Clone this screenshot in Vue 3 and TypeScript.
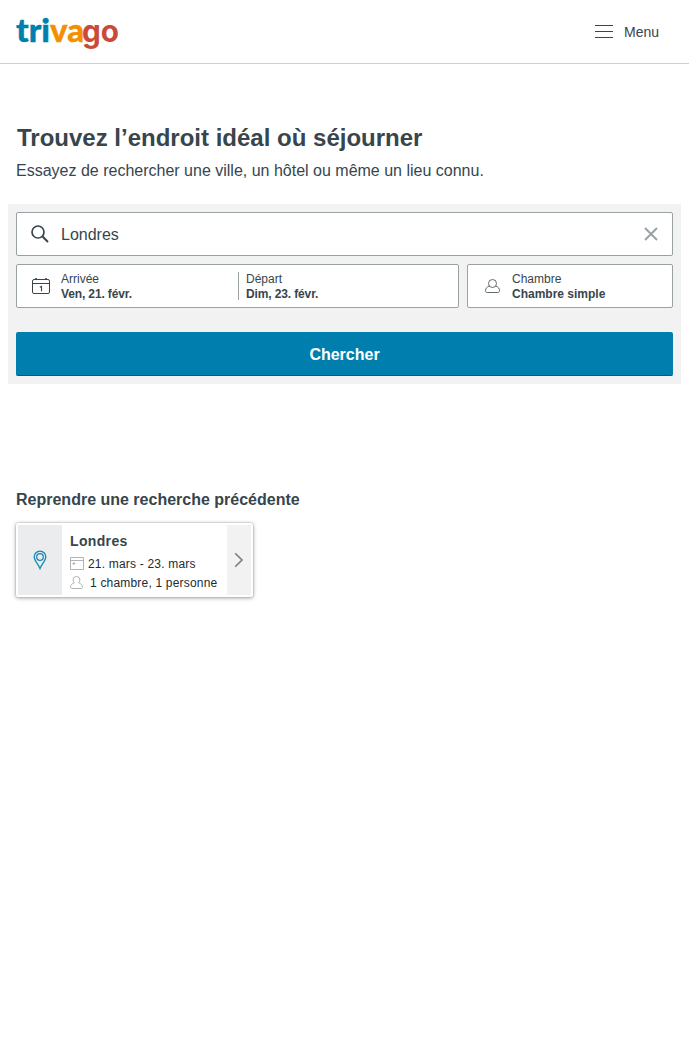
<script setup lang="ts">
import { ref } from 'vue'

const destination = ref('Londres')

interface Stay {
  label: string
  value: string
}

const stays: Stay[] = [
  { label: 'Arrivée', value: 'Ven, 21. févr.' },
  { label: 'Départ', value: 'Dim, 23. févr.' },
]
const room: Stay = { label: 'Chambre', value: 'Chambre simple' }
</script>

<template>
  <div class="page">
    <header class="header">
      <svg class="logo" width="104" height="40" viewBox="0 0 104 40" role="img" aria-label="trivago">
        <text y="29.7" class="tri" x="0" textLength="34" lengthAdjust="spacingAndGlyphs">tri</text>
        <text y="29.7" class="va" x="34" textLength="34" lengthAdjust="spacingAndGlyphs">va</text>
        <text y="29.7" class="go" x="66" textLength="37" lengthAdjust="spacingAndGlyphs">go</text>
      </svg>
      <button class="menu" type="button">
        <svg width="18" height="14" viewBox="0 0 18 14">
          <path d="M0 .5h18M0 6.5h18M0 12.5h18" stroke="#37454d" />
        </svg>
        <span>Menu</span>
      </button>
    </header>

    <main>
      <h1>Trouvez l’endroit idéal où séjourner</h1>
      <p class="intro">Essayez de rechercher une ville, un hôtel ou même un lieu connu.</p>

      <section class="search">
        <div class="box query">
          <svg width="18" height="18" viewBox="0 0 18 18" fill="none" stroke="#37454d">
            <circle cx="7" cy="7" r="6" stroke-width="1.7" />
            <path d="M11.3 11.3L17 17" stroke-width="2" />
          </svg>
          <span class="value">{{ destination }}</span>
          <svg class="clear" width="14" height="14" viewBox="0 0 14 14">
            <path d="M1 1l12 12M13 1L1 13" stroke="#9aa2a6" stroke-width="2" />
          </svg>
        </div>

        <div class="row">
          <div class="box dates">
            <svg class="calendar" width="18" height="17" viewBox="0 0 18 17" fill="none" stroke="#37454d">
              <rect x=".5" y="1.5" width="17" height="14" rx="1.5" />
              <path d="M.5 5.5h17M3 .7h2M13 .7h2" />
              <path d="M7.8 9.3l1.7-.9v4.9" stroke-width="1.1" />
            </svg>
            <div v-for="stay in stays" :key="stay.label" class="stay">
              <span>{{ stay.label }}</span>
              <strong>{{ stay.value }}</strong>
            </div>
          </div>
          <div class="box room">
            <svg width="16" height="15" viewBox="0 0 16 15" fill="none" stroke="#5f6a71">
              <circle cx="7.5" cy="4.5" r="4" />
              <path d="M4.2 7.1C1.8 7.8.5 9.4.5 11.8c0 1.2.6 1.7 1.7 1.7h10.6c1.1 0 1.7-.5 1.7-1.7 0-2.4-1.3-4-3.7-4.7" />
            </svg>
            <div class="pair">
              <span>{{ room.label }}</span>
              <strong>{{ room.value }}</strong>
            </div>
          </div>
        </div>

        <button class="submit" type="button">Chercher</button>
      </section>

      <h2>Reprendre une recherche précédente</h2>
      <article class="card">
        <div class="pin">
          <svg width="14" height="20" viewBox="0 0 14 20" fill="none" stroke="#1687b3" stroke-width="1.3">
            <path d="M7 18.5C5.7 14.7 1.2 10.5 1.2 6.9a5.8 5.8 0 0 1 11.6 0c0 3.6-4.5 7.8-5.8 11.6z" />
            <circle cx="7" cy="7" r="3.3" />
          </svg>
        </div>
        <div class="details">
          <h3>Londres</h3>
          <div class="line">
            <svg width="14" height="13" viewBox="0 0 14 13" fill="none" stroke="#aeb4b7">
              <path d="M.5 .5h13v12H.5zM.5 3.5h13M2.4 6.5h3M3.9 5v3" />
            </svg>
            <span>21. mars - 23. mars</span>
          </div>
          <div class="line persons">
            <svg width="13" height="13" viewBox="0 0 13 13" fill="none" stroke="#aeb4b7">
              <path d="M4.4 6.8C3.5 6.1 3.1 5 3.1 3.9A3.4 3.4 0 0 1 6.5.5a3.4 3.4 0 0 1 3.4 3.4c0 1.1-.4 2.2-1.3 2.9M4.4 6.8C1.9 7.8.6 8.8.5 11c0 1 .5 1.5 1.5 1.5h9c1 0 1.5-.5 1.5-1.5-.1-2.2-1.4-3.2-3.9-4.2" />
            </svg>
            <span>1 chambre, 1 personne</span>
          </div>
        </div>
        <div class="next">
          <svg width="10" height="16" viewBox="0 0 10 16" fill="none">
            <path d="M1.2 1.2L8 8l-6.8 6.8" stroke="#777f84" stroke-width="1.6" />
          </svg>
        </div>
      </article>
    </main>
  </div>
</template>

<style>
body {
  margin: 0;
  background: #fff;
}
</style>

<style scoped>
* {
  box-sizing: border-box;
}
.page {
  min-height: 1064px;
  color: #37454d;
  font-family: "Liberation Sans", Arial, sans-serif;
}
svg {
  display: block;
  flex: none;
}
button {
  font-family: inherit;
  border: 0;
  padding: 0;
}
.header {
  height: 64px;
  display: flex;
  justify-content: space-between;
  align-items: center;
  padding: 0 30px 0 16px;
  border-bottom: 1px solid #cdd0d2;
}
.logo {
  overflow: visible;
  font: 900 32px/1 Lato, sans-serif;
  stroke-width: 0.4px;
}
.tri { fill: #007faf; stroke: #007faf; }
.va { fill: #f48f00; stroke: #f48f00; }
.go {
  fill: #c94a38;
  font-family: Inter, sans-serif;
  font-weight: 700;
  font-size: 31px;
}
.menu {
  display: flex;
  align-items: center;
  gap: 11px;
  background: none;
  color: inherit;
  font-size: 14px;
}
main {
  padding: 60px 8px 0;
}
h1 {
  margin: 0 0 0 9px;
  font-size: 24px;
  line-height: 28px;
}
.intro {
  margin: 9px 0 0 8px;
  font-size: 16px;
  line-height: 20px;
}
.search {
  margin-top: 23px;
  height: 180px;
  padding: 8px;
  background: #f2f2f2;
}
.box {
  height: 44px;
  display: flex;
  align-items: center;
  background: #fff;
  border: 1px solid #9aa2a6;
  border-radius: 2px;
}
.query {
  padding: 0 14px;
}
.value {
  flex: 1;
  margin-left: 12px;
  padding-top: 2px;
  font-size: 16px;
}
.row {
  display: flex;
  gap: 8px;
  margin-top: 8px;
}
.dates {
  width: 443px;
  padding-left: 15px;
}
.stay,
.pair {
  font-size: 12px;
  line-height: 15px;
}
.stay span,
.stay strong,
.pair span,
.pair strong {
  display: block;
}
.stay {
  width: 177px;
  margin-left: 11px;
  padding-top: 1px;
}
.stay strong {
  letter-spacing: -0.13px;
}
.stay + .stay {
  height: 28px;
  margin-left: 0;
  padding: 0 0 0 7px;
  border-left: 1px solid #9aa2a6;
}
.room {
  flex: 1;
  padding-left: 17px;
}
.pair {
  margin-left: 11px;
  padding-top: 1px;
}
.submit {
  display: block;
  width: 100%;
  height: 44px;
  margin-top: 24px;
  padding-top: 2px;
  background: #007faf;
  color: #fff;
  border-bottom: 1px solid #005f83;
  border-radius: 2px;
  font-size: 16px;
  font-weight: 700;
}
h2 {
  margin: 106px 0 0 8px;
  font-size: 16px;
  line-height: 20px;
}
.card {
  width: 237px;
  height: 74px;
  margin: 13px 0 0 8px;
  padding: 2px;
  display: flex;
  border-radius: 2px;
  background: #fff;
  box-shadow: 0 0 2px rgba(55, 69, 77, 0.4), 0 1px 4px rgba(55, 69, 77, 0.45);
}
.pin,
.next {
  display: flex;
  align-items: center;
  justify-content: center;
}
.pin {
  width: 44px;
  background: #ebecee;
}
.details {
  flex: 1;
  padding: 8px 0 0 8px;
  white-space: nowrap;
}
h3 {
  margin: 0 0 5px;
  font-size: 14px;
  line-height: 16px;
  letter-spacing: 0.35px;
}
.line {
  display: flex;
  align-items: center;
  gap: 4px;
  height: 19px;
  font-size: 12px;
  letter-spacing: 0.19px;
  color: #222b30;
}
.persons {
  gap: 7px;
}
.next {
  width: 24px;
  background: #f2f2f2;
}
</style>
